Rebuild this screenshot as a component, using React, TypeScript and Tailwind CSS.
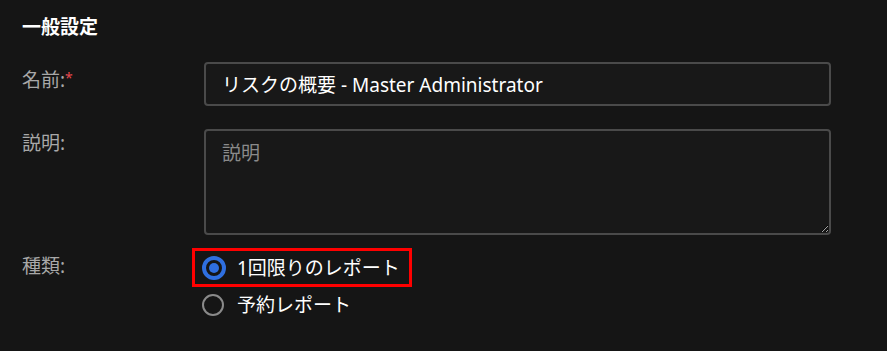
const labelCls = 'w-[182px] shrink-0 text-[19px] text-[#a8a8a8] leading-[26px]';

export default function App() {
  return (
    <div className="w-[887px] h-[351px] bg-[#151515] pl-[22px] pt-[14px] font-['Noto_Sans','Noto_Sans_CJK_JP',sans-serif]">
      {/* Heading */}
      <h2 className="text-[19px] font-bold text-white leading-[26px]">一般設定</h2>

      {/* Name */}
      <div className="flex mt-[22px]">
        <label className={`${labelCls} pt-[5px]`}>
          名前:<span className="text-[#e5484d] text-[14px] align-top relative -top-[2px]">*</span>
        </label>
        <input
          defaultValue="リスクの概要 - Master Administrator"
          className="w-[627px] h-[44px] bg-[#181818] border-2 border-[#4a4a4a] rounded-[4px] px-[16px] text-[19px] text-white outline-none"
        />
      </div>

      {/* Description */}
      <div className="flex mt-[23px]">
        <label className={`${labelCls} pt-[1px]`}>説明:</label>
        <textarea
          placeholder="説明"
          className="w-[627px] h-[106px] bg-[#181818] border-2 border-[#4a4a4a] rounded-[4px] px-[16px] pt-[8px] text-[19px] text-white placeholder-[#8a8a8a] outline-none resize-y"
        />
      </div>

      {/* Type */}
      <div className="flex mt-[13px]">
        <label className={`${labelCls} pt-[5px]`}>種類:</label>
        <div className="flex flex-col -ml-[12px]">
          <div className="w-[220px] h-[39px] border-[3px] border-[#ff0000] flex items-center pl-[7px] gap-[11px]">
            <span className="w-[24px] h-[24px] rounded-full border-[4px] border-[#2f6fe0] flex items-center justify-center">
              <span className="w-[10px] h-[10px] rounded-full bg-[#2f6fe0]" />
            </span>
            <span className="text-[19px] text-white leading-[26px]">1回限りのレポート</span>
          </div>
          <div className="flex items-center pl-[10px] gap-[13px] mt-[5px]">
            <span className="w-[22px] h-[22px] rounded-full border-2 border-[#8a8a8a]" />
            <span className="text-[19px] text-white leading-[26px]">予約レポート</span>
          </div>
        </div>
      </div>
    </div>
  );
}
